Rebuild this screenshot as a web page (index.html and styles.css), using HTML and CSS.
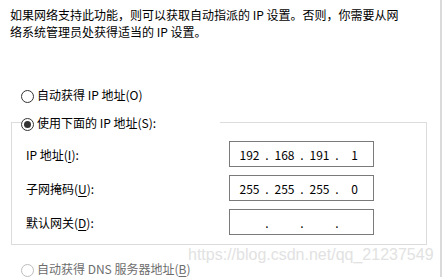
FILE: index.html
```html
<!DOCTYPE html>
<html lang="zh-CN">
<head>
<meta charset="utf-8">
<link rel="stylesheet" href="styles.css">
</head>
<body>
<div class="page">
  <p class="desc">如果网络支持此功能，则可以获取自动指派的 IP 设置。否则，你需要从网<br>络系统管理员处获得适当的 IP 设置。</p>

  <div class="radio-row">
    <span class="radio"></span>
    <span class="radio-label">自动获得 IP 地址(O)</span>
  </div>

  <fieldset class="group">
    <legend class="legend">
      <span class="radio checked"></span>
      <span class="radio-label">使用下面的 IP 地址(S):</span>
    </legend>
    <div class="grid">
      <label class="field-label">IP 地址(<u>I</u>):</label>
      <div class="ip">
        <span class="oct">192</span><span class="dot">.</span>
        <span class="oct">168</span><span class="dot">.</span>
        <span class="oct">191</span><span class="dot">.</span>
        <span class="oct">1</span>
      </div>
      <label class="field-label">子网掩码(<u>U</u>):</label>
      <div class="ip">
        <span class="oct">255</span><span class="dot">.</span>
        <span class="oct">255</span><span class="dot">.</span>
        <span class="oct">255</span><span class="dot">.</span>
        <span class="oct">0</span>
      </div>
      <label class="field-label">默认网关(<u>D</u>):</label>
      <div class="ip">
        <span class="oct"></span><span class="dot">.</span>
        <span class="oct"></span><span class="dot">.</span>
        <span class="oct"></span><span class="dot">.</span>
        <span class="oct"></span>
      </div>
    </div>
  </fieldset>

  <div class="radio-row disabled">
    <span class="radio"></span>
    <span class="radio-label">自动获得 DNS 服务器地址(<u>B</u>)</span>
  </div>

  <div class="watermark">https://blog.csdn.net/qq_21237549</div>
</div>
</body>
</html>
```
FILE: styles.css
```css
html, body {
  margin: 0;
  padding: 0;
  background: #ffffff;
}

body {
  width: 443px;
  height: 277px;
  overflow: hidden;
  font-family: "Noto Sans CJK SC", "Noto Sans", sans-serif;
  font-size: 12px;
  line-height: 17px;
  color: #000000;
}

.page {
  position: relative;
  box-sizing: border-box;
  width: 442px;
  height: 277px;
  padding: 6px 0 0 10px;
  border-right: 2px solid #dadada;
}

.desc {
  margin: 0;
  white-space: nowrap;
}

.radio-row {
  display: flex;
  align-items: center;
  gap: 3px;
  margin: 46px 0 0 11px;
  height: 17px;
}

.radio {
  box-sizing: border-box;
  width: 13px;
  height: 13px;
  border: 1px solid #333333;
  border-radius: 50%;
  background: #ffffff;
  display: flex;
  align-items: center;
  justify-content: center;
  flex: none;
  margin-top: 3px;
}

.radio.checked::after {
  content: "";
  width: 7px;
  height: 7px;
  border-radius: 50%;
  background: #333333;
}

.radio-label {
  white-space: nowrap;
}

u {
  text-decoration: underline;
  text-underline-offset: 2px;
}

.group {
  margin: 11px 0 0 1px;
  width: 416px;
  box-sizing: border-box;
  padding: 10px 0 9px 14px;
  border: 1px solid #dcdcdc;
}

.legend {
  display: flex;
  align-items: center;
  gap: 3px;
  width: 199px;
  box-sizing: border-box;
  padding: 0;
  margin-left: -5px;
  height: 17px;
}

.grid {
  display: grid;
  grid-template-columns: 203px 145px;
  row-gap: 8px;
  align-items: center;
}

.field-label {
  white-space: nowrap;
}

.ip {
  box-sizing: border-box;
  height: 26px;
  border: 1px solid #7a7a7a;
  display: flex;
  align-items: center;
  padding-left: 4px;
}

.oct {
  width: 31px;
  text-align: center;
}

.dot {
  width: 4px;
  text-align: center;
}

.disabled {
  margin-top: 15px;
  color: #6d6d6d;
}

.disabled .radio {
  border-color: #bcbcbc;
}

.watermark {
  position: absolute;
  left: 188px;
  top: 246px;
  font-family: "Liberation Sans", Arial, sans-serif;
  font-size: 16px;
  line-height: 18px;
  color: #e2e2e2;
  white-space: nowrap;
}
```
